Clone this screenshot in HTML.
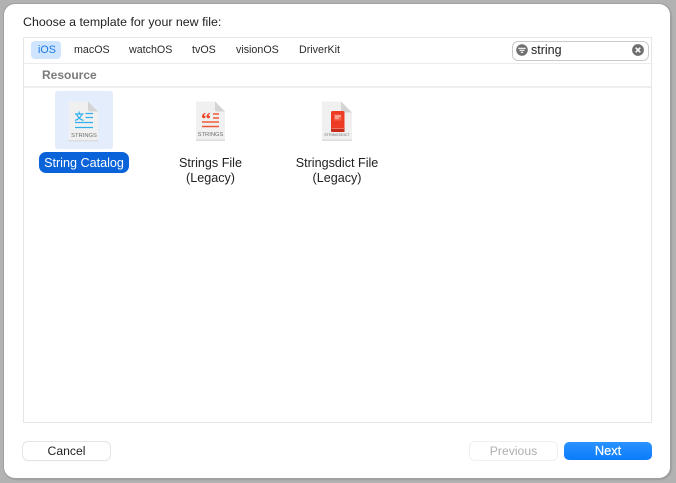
<!DOCTYPE html>
<html>
<head>
<meta charset="utf-8">
<style>
html,body{margin:0;padding:0;width:676px;height:483px;overflow:hidden;background:#b2b2b2;font-family:"Liberation Sans",sans-serif;color:#222}
#all{position:absolute;left:0;top:0;width:676px;height:483px;filter:blur(.3px)}
.a{position:absolute;white-space:nowrap}
#win{position:absolute;left:4px;top:4px;width:666px;height:474px;background:#fff;border-radius:11px;box-shadow:0 0 0 1px #a0a0a0,1px 1px 2px #808080}
.tab{position:absolute;top:44px;font-size:10.7px;line-height:13px;color:#2a2a2a}
.c{position:absolute;text-align:center;font-size:12.6px;line-height:15px;color:#222;white-space:nowrap}
.btn{position:absolute;top:442px;height:18px;width:87px;border-radius:5px;text-align:center;font-size:12.2px;line-height:18px}
</style>
</head>
<body>
<div id="all">
<div id="win"></div>
<div class="a" style="left:23px;top:15px;font-size:12.4px;line-height:15px;color:#222">Choose a template for your new file:</div>

<div class="a" style="left:23px;top:37px;width:627px;height:384px;border:1px solid #e6e6e6;background:#fff"></div>
<div class="a" style="left:24px;top:63px;width:627px;height:1px;background:#ebebeb"></div>
<div class="a" style="left:24px;top:86px;width:627px;height:2px;background:#eeeeee"></div>

<div class="a" style="left:31px;top:41px;width:30px;height:18px;border-radius:4px;background:#cfe4ff"></div>
<div class="tab" style="left:38px;color:#1a78e6">iOS</div>
<div class="tab" style="left:74px">macOS</div>
<div class="tab" style="left:129px">watchOS</div>
<div class="tab" style="left:192px">tvOS</div>
<div class="tab" style="left:236px">visionOS</div>
<div class="tab" style="left:299px">DriverKit</div>

<div class="a" style="left:512px;top:41px;width:135px;height:18px;border:1px solid #cacaca;border-radius:6px;background:#fff"></div>
<svg class="a" style="left:516px;top:44px" width="12" height="12" viewBox="0 0 12 12">
<circle cx="6" cy="6" r="5.8" fill="#707070"/>
<path d="M2.300 4.300h7.400M3.500 6.300h5M4.800 8.300h2.400" stroke="#fff" stroke-width="1.200"/>
</svg>
<div class="a" style="left:531px;top:43px;font-size:12.500px;line-height:15px;color:#222">string</div>
<svg class="a" style="left:632px;top:44px" width="12" height="12" viewBox="0 0 12 12">
<circle cx="6" cy="6" r="5.900" fill="#6e6e6e"/>
<path d="M3.700 3.700l4.600 4.600M8.300 3.700l-4.600 4.600" stroke="#fff" stroke-width="1.500"/>
</svg>

<div class="a" style="left:42px;top:68px;font-size:12px;line-height:14px;font-weight:bold;color:#7a7a7a">Resource</div>

<div class="a" style="left:55px;top:91px;width:58px;height:58px;border-radius:3px;background:#e4edfb"></div>

<!-- String catalog icon -->
<svg class="a" style="left:68px;top:100px" width="32" height="43" viewBox="0 0 32 43">
<path d="M0.500 1.500H20L30 11.500V41H0.500Z" fill="#f0f0f0"/>
<path d="M0.500 40H30V41.500H0.500Z" fill="#dcdcdc"/>
<path d="M20 1.500L30 11.500H22Q20 11.500 20 9.500Z" fill="#d4d4d4"/>
<g stroke="#2fb0ee" fill="none">
<path d="M7 14H15.500M11.200 11.500V14M8.500 14Q10.500 19 15.500 20.500M14 14Q12 19 7 20.500" stroke-width="1.200"/>
<path d="M17.500 13.500H25M17.500 17.500H25M7 22.500H25M7 27.500H25" stroke-width="1.300"/>
</g>
<text x="16" y="37" font-family="Liberation Sans" font-size="5.800" text-anchor="middle" fill="#6e6e6e">STRINGS</text>
</svg>

<div class="a" style="left:39px;top:152px;width:90px;height:21px;border-radius:7px;background:#0a63d8"></div>
<div class="c" style="left:39px;top:156px;width:90px;color:#fff">String Catalog</div>

<!-- Strings File icon -->
<svg class="a" style="left:195px;top:100px" width="32" height="43" viewBox="0 0 32 43">
<path d="M1 1.500H20L30 11.500V40.500H1Z" fill="#f0f0f0"/>
<path d="M1 39.500H30V41H1Z" fill="#dcdcdc"/>
<path d="M20 1.500L30 11.500H22Q20 11.500 20 9.500Z" fill="#d4d4d4"/>
<g fill="#ee4525">
<path d="M7 16.500a1.800 1.800 0 1 0 3.400-.8 2 2 0 0 1-1.500-.2q0-1 1.600-1.800v-1q-3.500 1-3.500 3.800Z"/>
<path d="M11.500 16.500a1.800 1.800 0 1 0 3.400-.8 2 2 0 0 1-1.500-.2q0-1 1.600-1.800v-1q-3.500 1-3.500 3.800Z"/>
</g>
<g stroke="#ee5a3a" stroke-width="1.400" fill="none">
<path d="M18 14H24M18 18H24M7 22H24M7 26.500H24"/>
</g>
<text x="15.500" y="36" font-family="Liberation Sans" font-size="5.800" text-anchor="middle" fill="#6e6e6e">STRINGS</text>
</svg>
<div class="c" style="left:160px;top:156px;width:101px">Strings File<br>(Legacy)</div>

<!-- Stringsdict icon -->
<svg class="a" style="left:321px;top:100px" width="32" height="43" viewBox="0 0 32 43">
<path d="M1 1.500H20L31 12.500V40.500H1Z" fill="#f0f0f0"/>
<path d="M1 39.500H31V41H1Z" fill="#dcdcdc"/>
<path d="M20 1.500L31 12.500H22Q20 12.500 20 10.500Z" fill="#d4d4d4"/>
<rect x="10" y="11" width="13.500" height="21" rx="1.500" fill="#ee3b24"/>
<path d="M10 28H23.500V32H11.500Q10 32 10 30.500Z" fill="#c62c18"/>
<path d="M10.500 28.500H23" stroke="#f58a78" stroke-width=".8"/>
<path d="M13 14.500H20.500V20.500H13Z" fill="#f4624a"/>
<path d="M14 16H20M14 18H18" stroke="#ffe0da" stroke-width="1"/>
<text x="16" y="36" font-family="Liberation Sans" font-size="3.800" text-anchor="middle" fill="#707070">STRINGSDICT</text>
</svg>
<div class="c" style="left:287px;top:156px;width:100px">Stringsdict File<br>(Legacy)</div>

<div class="btn" style="left:23px;background:#fff;color:#222;box-shadow:0 0 0 1px #e4e4e4,0 1px 1px #e6e6e6">Cancel</div>
<div class="btn" style="left:470px;background:#fff;color:#aeaeae;box-shadow:0 0 0 1px #f0f0f0">Previous</div>
<div class="btn" style="left:564px;width:88px;background:linear-gradient(#2a92ff,#0a7bfa);color:#fff;font-size:12.800px;-webkit-text-stroke:.2px #fff">Next</div>
</div>
</body>
</html>
